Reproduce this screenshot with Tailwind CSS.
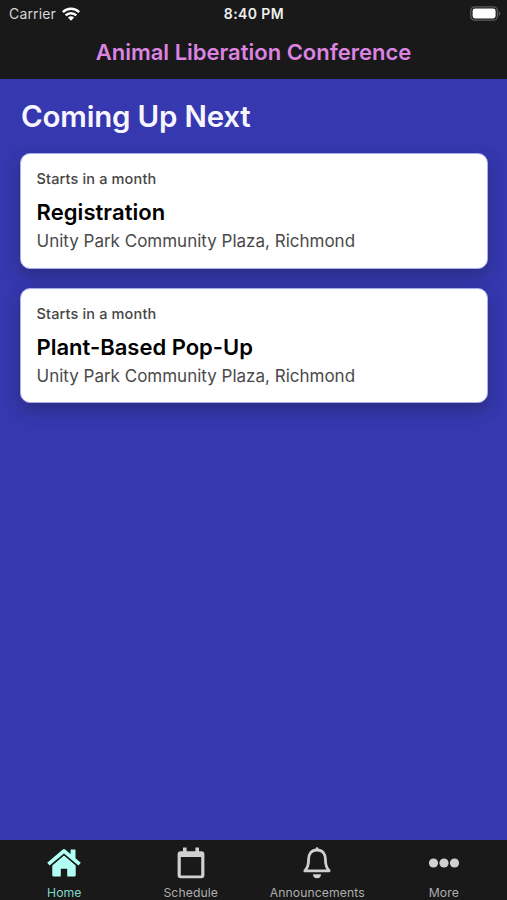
<!DOCTYPE html>
<html lang="en">
<head>
    <meta charset="UTF-8">
    <meta name="viewport" content="width=device-width, initial-scale=1.0">
    <title>Animal Liberation Conference</title>
    <script src="https://cdn.jsdelivr.net/npm/@tailwindcss/browser@4"></script>
</head>
<body class="h-screen flex flex-col overflow-hidden bg-[#3538ae] font-['Inter',sans-serif] whitespace-nowrap">
    <!-- Header -->
    <header class="h-[79px] shrink-0 bg-[#191919]">
        <!-- Status bar -->
        <div class="h-[27px] grid grid-cols-3 items-center pl-[9px] pr-[6px] text-[14px]">
            <div class="flex items-center gap-[6px] text-[#d6d6d6]">
                <span class="tracking-[0.15px]">Carrier</span>
                <svg class="w-[18px] h-[14px]" viewBox="0 0 18 14" fill="none" stroke="#fff" stroke-width="2.5">
                    <path d="M0.8 5.1a11.6 11.6 0 0 1 16.4 0" />
                    <path d="M3.7 8.4a7.5 7.5 0 0 1 10.6 0" />
                    <path d="M9 13.7L5.9 10.6a4.4 4.4 0 0 1 6.2 0z" fill="#fff" stroke="none" />
                </svg>
            </div>
            <span class="pr-[2px] text-center tracking-[0.4px] font-semibold text-[#f0f0f0]">8:40 PM</span>
            <svg class="w-[31px] h-[15px] justify-self-end" viewBox="0 0 31 15">
                <rect x="0.8" y="0.8" width="26.6" height="13.4" rx="4" fill="none" stroke="#5c5c5c" stroke-width="1.3" />
                <rect x="2.6" y="2.6" width="23" height="9.8" rx="2.4" fill="#fff" />
                <path d="M28.8 5.2c2 .9 2 3.7 0 4.6z" fill="#5c5c5c" />
            </svg>
        </div>
        <h1 class="h-[51px] flex items-center justify-center text-[22px] font-semibold text-[#dc84e2]">Animal Liberation Conference</h1>
    </header>

    <!-- Main Content -->
    <main class="flex-1 px-5 pt-[18px]">
        <h2 class="pl-px text-[29.5px] leading-[38px] tracking-[-0.2px] font-semibold text-[#f7f5ff]">Coming Up Next</h2>
        <div class="mt-[18px] mr-[-1px] flex flex-col gap-[19px]">
            <article class="h-[115.5px] rounded-[10px] border border-[#a9adf0] bg-white px-[15.5px] pt-[15px] shadow-[0_7px_16px_rgba(30,30,60,0.38)]">
                <p class="text-[14.5px] leading-5 tracking-[0.15px] font-medium text-[#454545]">Starts in a month</p>
                <h3 class="mt-[9px] text-[22px] leading-7 tracking-[0.07px] font-semibold text-black">Registration</h3>
                <p class="mt-[3px] text-[17px] leading-6 text-[#4a4a4a]">Unity Park Community Plaza, Richmond</p>
            </article>
            <article class="h-[115.5px] rounded-[10px] border border-[#a9adf0] bg-white px-[15.5px] pt-[15px] shadow-[0_7px_16px_rgba(30,30,60,0.38)]">
                <p class="text-[14.5px] leading-5 tracking-[0.15px] font-medium text-[#454545]">Starts in a month</p>
                <h3 class="mt-[9px] text-[22px] leading-7 font-semibold text-black">Plant-Based Pop-Up</h3>
                <p class="mt-[3px] text-[17px] leading-6 text-[#4a4a4a]">Unity Park Community Plaza, Richmond</p>
            </article>
        </div>
    </main>

    <!-- Tab bar -->
    <nav class="h-[60px] shrink-0 grid grid-cols-4 bg-[#191919] pt-[5px] pl-px text-[12.2px] leading-4 tracking-[0.1px] text-[#adadad]">
        <a class="flex flex-col items-center gap-1 text-[#83d6cc]">
            <svg class="w-9 h-9" viewBox="0 0 36 36" fill="#b2fff6">
                <path d="M6.3 20.2L18 10.2l11.7 10v10a1.3 1.3 0 0 1-1.3 1.3h-7.2v-7.8h-6.4v7.8H7.6a1.3 1.3 0 0 1-1.3-1.3z" />
                <path d="M2.6 19.4L18 6.4l15.4 13" fill="none" stroke="#191919" stroke-width="6.2" />
                <path d="M24.6 4.4h4.9v11.4L24.6 11.6z" />
                <path d="M2.4 19.2L18 6l15.6 13.2" fill="none" stroke="#b2fff6" stroke-width="3.7" stroke-linejoin="round" />
            </svg>
            <span>Home</span>
        </a>
        <a class="flex flex-col items-center gap-1">
            <svg class="w-9 h-9" viewBox="0 0 36 36" fill="#d0d0d0">
                <path fill-rule="evenodd" d="M10 2.5h3.6v3.8h8.8V2.5H26v3.8h2.4a3 3 0 0 1 3 3v21a3 3 0 0 1-3 3H7.6a3 3 0 0 1-3-3v-21a3 3 0 0 1 3-3H10zM7.8 12v18.5h20.4V12z" />
            </svg>
            <span>Schedule</span>
        </a>
        <a class="flex flex-col items-center gap-1">
            <svg class="w-9 h-9" viewBox="0 0 36 36">
                <path d="M18 5c-5.6 0-8.4 4-8.4 9.1 0 6.5-1.3 8.4-3.8 11.7h24.4c-2.5-3.3-3.8-5.2-3.8-11.7C26.4 9 23.6 5 18 5zM18 3.6v1" fill="none" stroke="#d0d0d0" stroke-width="2.8" stroke-linejoin="round" stroke-linecap="round" />
                <path d="M14 29.3h8a4 4 0 0 1-8 0z" fill="#d0d0d0" />
            </svg>
            <span>Announcements</span>
        </a>
        <a class="flex flex-col items-center gap-1">
            <svg class="w-9 h-9" viewBox="0 0 36 36" fill="#d0d0d0">
                <circle cx="7.5" cy="18" r="4.6" />
                <circle cx="18" cy="18" r="4.6" />
                <circle cx="28.5" cy="18" r="4.6" />
            </svg>
            <span>More</span>
        </a>
    </nav>
</body>
</html>
